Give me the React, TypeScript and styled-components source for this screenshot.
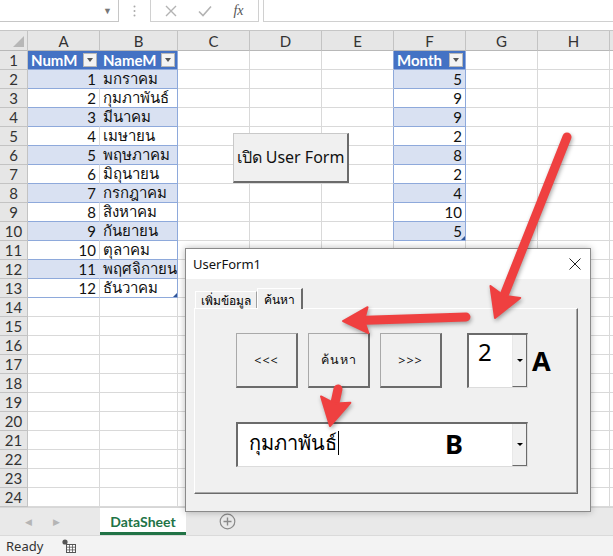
import styled, { createGlobalStyle } from 'styled-components'

const Global = createGlobalStyle`
  html, body { margin: 0; padding: 0; background: #fff; }
  body { width: 613px; height: 556px; overflow: hidden; font-family: "Lato", "Noto Sans", sans-serif; }
  * { box-sizing: border-box; }
`

const Screen = styled.div`
  position: relative;
  width: 613px;
  height: 556px;
  display: flex;
  flex-direction: column;
  overflow: hidden;
  background: #fff;
`

/* ---------- formula bar ---------- */
const FormulaBar = styled.div`
  height: 30px;
  display: flex;
  align-items: flex-start;
`
const NameBox = styled.div`
  width: 119px;
  height: 22px;
  border-right: 1px solid #c6c6c6;
  border-bottom: 1px solid #c6c6c6;
  display: flex;
  justify-content: flex-end;
  align-items: center;
  padding-right: 6px;
  color: #777;
  font-size: 9px;
`
const Grip = styled.div`
  width: 31px;
  height: 22px;
  display: flex;
  align-items: center;
  justify-content: center;
`
const FxBox = styled.div`
  width: 109px;
  height: 22px;
  border: 1px solid #d0d0d0;
  border-top: none;
  display: flex;
  align-items: center;
  justify-content: space-around;
  padding: 0 4px;
`
const FxLabel = styled.span`
  font-family: "Liberation Serif", serif;
  font-style: italic;
  font-size: 14px;
  color: #555;
`
const FormulaInput = styled.div`
  flex: 1;
  height: 22px;
  margin-left: 4px;
  border-left: 1px solid #d0d0d0;
  border-bottom: 1px solid #d0d0d0;
`

/* ---------- grid ---------- */
const Grid = styled.div`
  display: grid;
  grid-template-columns: 28px 72px 78px 72px 72px 72px 72px 72px 72px 3px;
  grid-template-rows: 20px repeat(24, 19px);
  border-top: 1px solid #c6c6c6;
`

type Kind = 'corner' | 'colhead' | 'rowhead' | 'plain' | 'thead' | 'band' | 'white'

const Cell = styled.div<{ $kind: Kind; $right?: boolean; $edge?: boolean; $blueRight?: boolean }>`
  position: relative;
  display: flex;
  align-items: center;
  justify-content: ${p => (p.$right ? 'flex-end' : p.$kind === 'colhead' || p.$kind === 'rowhead' ? 'center' : 'flex-start')};
  padding: 0 3px;
  font-size: 15px;
  white-space: nowrap;
  overflow: hidden;
  color: ${p => (p.$kind === 'thead' ? '#fff' : p.$kind === 'colhead' || p.$kind === 'rowhead' ? '#333' : '#111')};
  font-weight: ${p => (p.$kind === 'thead' ? 700 : 400)};
  background: ${p =>
    p.$kind === 'thead'
      ? '#4472c4'
      : p.$kind === 'band'
      ? '#d9e1f2'
      : p.$kind === 'colhead' || p.$kind === 'rowhead' || p.$kind === 'corner'
      ? '#e6e6e6'
      : '#fff'};
  border-right: 1px solid
    ${p =>
      p.$edge || p.$blueRight
        ? '#8ea9db'
        : p.$kind === 'thead'
        ? '#4472c4'
        : p.$kind === 'band'
        ? '#d9e1f2'
        : p.$kind === 'colhead' || p.$kind === 'rowhead' || p.$kind === 'corner'
        ? '#c3c3c3'
        : '#d9d9d9'};
  border-bottom: 1px solid
    ${p =>
      p.$kind === 'thead' || p.$kind === 'band' || p.$kind === 'white'
        ? '#8ea9db'
        : p.$kind === 'colhead' || p.$kind === 'corner'
        ? '#b8b8b8'
        : p.$kind === 'rowhead'
        ? '#c3c3c3'
        : '#d9d9d9'};
`
const CornerMark = styled.div`
  position: absolute;
  right: 3px;
  bottom: 3px;
  width: 0;
  height: 0;
  border-left: 11px solid transparent;
  border-bottom: 11px solid #b7b7b7;
`
const FilterBtn = styled.div`
  margin-left: auto;
  margin-right: -1px;
  width: 14px;
  height: 14px;
  background: #f3f3f3;
  border: 1px solid #b7b7b7;
  display: flex;
  align-items: center;
  justify-content: center;
  &::after {
    content: '';
    border-left: 3.5px solid transparent;
    border-right: 3.5px solid transparent;
    border-top: 4px solid #555;
  }
`
const TableEnd = styled.div`
  position: absolute;
  right: 0;
  bottom: 0;
  width: 0;
  height: 0;
  border-left: 4px solid transparent;
  border-bottom: 4px solid #2f5597;
`

/* ---------- sheet tabs / status ---------- */
const TabBar = styled.div`
  height: 28px;
  background: #e9e9e9;
  border-top: 1px solid #d6d6d6;
  display: flex;
  align-items: stretch;
`
const ScrollArrows = styled.div`
  width: 100px;
  display: flex;
  align-items: center;
  gap: 21px;
  padding-left: 25px;
  color: #b5b5b5;
  font-size: 9px;
`
const SheetTab = styled.div`
  width: 86px;
  background: #fff;
  display: flex;
  align-items: center;
  justify-content: center;
  font-size: 14px;
  font-weight: 700;
  color: #217346;
  border-bottom: 3px solid #217346;
  padding-top: 2px;
`
const AddSheet = styled.div`
  margin-left: 33px;
  display: flex;
  align-items: center;
`
const StatusBar = styled.div`
  flex: 1;
  background: #f3f3f3;
  border-top: 1px solid #dadada;
  display: flex;
  align-items: center;
  gap: 19px;
  padding-left: 6px;
  font-size: 13px;
  color: #333;
  font-family: "Noto Sans", sans-serif;
`

/* ---------- sheet button ---------- */
const SheetButton = styled.div`
  position: absolute;
  left: 233px;
  top: 133px;
  width: 116px;
  height: 50px;
  background: #f0f0f0;
  border-top: 1px solid #c9c9c9;
  border-left: 1px solid #c9c9c9;
  border-right: 2px solid #6b6b6b;
  border-bottom: 2px solid #6b6b6b;
  display: flex;
  align-items: center;
  justify-content: center;
  font-size: 16px;
  color: #111;
  font-family: "Noto Sans", sans-serif;
`

/* ---------- user form ---------- */
const UserForm = styled.div`
  position: absolute;
  left: 185px;
  top: 248px;
  width: 406px;
  height: 264px;
  border: 1px solid #8a8a8a;
  box-shadow: 0 0 7px rgba(0, 0, 0, 0.28);
  display: flex;
  flex-direction: column;
  font-family: "Noto Sans", sans-serif;
`
const TitleBar = styled.div`
  height: 30px;
  background: #fff;
  display: flex;
  align-items: center;
  justify-content: space-between;
  padding: 0 9px 0 7px;
  font-size: 13px;
  color: #111;
`
const FormBody = styled.div`
  flex: 1;
  background: #f0f0f0;
  padding: 9px 12px 17px 8px;
  display: flex;
  flex-direction: column;
`
const TabStrip = styled.div`
  height: 20px;
  display: flex;
  align-items: flex-end;
  padding-left: 1px;
`
const FormTab = styled.div<{ $active?: boolean }>`
  height: ${p => (p.$active ? '21px' : '17px')};
  margin-bottom: ${p => (p.$active ? '-1px' : '0')};
  background: #f0f0f0;
  border-top: 1px solid #fff;
  border-left: 1px solid #fff;
  border-right: ${p => (p.$active ? '2px solid #6b6b6b' : '1px solid #a0a0a0')};
  padding: 0 ${p => (p.$active ? '6px' : '5px')};
  font-size: 12px;
  display: flex;
  align-items: ${p => (p.$active ? 'flex-start' : 'center')};
  padding-top: ${p => (p.$active ? '1px' : '0')};
  position: relative;
  z-index: 1;
`
const TabPanel = styled.div`
  flex: 1;
  border: 1px solid;
  border-color: #fff #6b6b6b #6b6b6b #fff;
  box-shadow: inset -1px -1px 0 #a9a9a9;
  padding: 24px 0 0 41px;
  display: flex;
  flex-direction: column;
  gap: 34px;
`
const ControlRow = styled.div`
  display: flex;
  align-items: flex-start;
  gap: 10px;
`
const FormButton = styled.div`
  width: 62px;
  height: 55px;
  background: #f0f0f0;
  border-top: 1px solid #a9a9a9;
  border-left: 1px solid #a9a9a9;
  border-right: 2px solid #6b6b6b;
  border-bottom: 2px solid #6b6b6b;
  display: flex;
  align-items: center;
  justify-content: center;
  font-size: 12.5px;
  letter-spacing: 1px;
  color: #111;
`
const Combo = styled.div<{ $w: number; $h: number }>`
  position: relative;
  width: ${p => p.$w}px;
  height: ${p => p.$h}px;
  background: #fff;
  border-top: 2px solid #6b6b6b;
  border-left: 2px solid #6b6b6b;
  border-right: 1px solid #dcdcdc;
  border-bottom: 1px solid #dcdcdc;
  display: flex;
`
const ComboValue = styled.div<{ $size: number; $top?: boolean }>`
  flex: 1;
  display: flex;
  align-items: ${p => (p.$top ? 'flex-start' : 'center')};
  padding: ${p => (p.$top ? '3px 0 0 9px' : '0 0 4px 11px')};
  font-size: ${p => p.$size}px;
  color: #000;
  line-height: 1.2;
`
const Caret = styled.span`
  display: inline-block;
  width: 1px;
  height: 24px;
  background: #000;
  margin-left: 1px;
`
const DropBtn = styled.div`
  width: 15px;
  background: #f0f0f0;
  border-left: 1px solid #e8e8e8;
  border-right: 1px solid #6b6b6b;
  border-bottom: 1px solid #6b6b6b;
  display: flex;
  align-items: center;
  justify-content: center;
  &::after {
    content: '';
    border-left: 3px solid transparent;
    border-right: 3px solid transparent;
    border-top: 3px solid #000;
  }
`
const Marker = styled.span`
  font-family: "Noto Sans", sans-serif;
  font-weight: 700;
  font-size: 27px;
  color: #000;
  line-height: 1;
`
const MarkerA = styled(Marker)`
  align-self: center;
  margin-left: -6px;
`
const MarkerB = styled(Marker)`
  position: absolute;
  left: 207px;
  top: 6px;
`

const Overlay = styled.svg`
  position: absolute;
  left: 0;
  top: 0;
  pointer-events: none;
  filter: drop-shadow(1px 2px 2px rgba(0, 0, 0, 0.35));
`

const cols = ['A', 'B', 'C', 'D', 'E', 'F', 'G', 'H', '']
const months = [
  'มกราคม', 'กุมภาพันธ์', 'มีนาคม', 'เมษายน', 'พฤษภาคม', 'มิถุนายน',
  'กรกฎาคม', 'สิงหาคม', 'กันยายน', 'ตุลาคม', 'พฤศจิกายน', 'ธันวาคม',
]
const monthCol = [5, 9, 9, 2, 8, 2, 4, 10, 5]

function Arrow({ from, tip, head, half, w }: { from: [number, number]; tip: [number, number]; head: number; half: number; w: number }) {
  const dx = tip[0] - from[0]
  const dy = tip[1] - from[1]
  const len = Math.hypot(dx, dy)
  const ux = dx / len
  const uy = dy / len
  const bx = tip[0] - ux * head
  const by = tip[1] - uy * head
  const px = -uy
  const py = ux
  const pts = `${tip[0]},${tip[1]} ${bx + px * half},${by + py * half} ${bx + ux * 4},${by + uy * 4} ${bx - px * half},${by - py * half}`
  return (
    <g fill="#ef4040" stroke="#ef4040">
      <line x1={from[0]} y1={from[1]} x2={bx + ux * 2} y2={by + uy * 2} strokeWidth={w} strokeLinecap="round" />
      <polygon points={pts} strokeWidth={2} strokeLinejoin="round" />
    </g>
  )
}

function renderCell(r: number, c: number) {
  const key = `${r}-${c}`
  if (c === 8) return <Cell key={key} $kind="plain" />
  const inT1 = (c === 0 || c === 1) && r <= 13
  const inT2 = c === 5 && r <= 10
  const blueRight = c === 4 && r <= 10
  if (inT1 || inT2) {
    const kind: Kind = r === 1 ? 'thead' : r % 2 === 0 ? 'band' : 'white'
    const edge = c === 1 || c === 5
    if (r === 1) {
      const label = c === 0 ? 'NumM' : c === 1 ? 'NameM' : 'Month'
      return (
        <Cell key={key} $kind={kind} $edge={edge}>
          {label}
          <FilterBtn />
        </Cell>
      )
    }
    const idx = r - 2
    const value = c === 0 ? String(idx + 1) : c === 1 ? months[idx] : String(monthCol[idx])
    const last = (inT1 && r === 13 && c === 1) || (inT2 && r === 10)
    return (
      <Cell key={key} $kind={kind} $edge={edge} $right={c !== 1}>
        {value}
        {last && <TableEnd />}
      </Cell>
    )
  }
  return <Cell key={key} $kind="plain" $blueRight={blueRight} />
}

export default function App() {
  const rows = Array.from({ length: 24 }, (_, i) => i + 1)
  return (
    <Screen>
      <Global />
      <FormulaBar>
        <NameBox>▼</NameBox>
        <Grip>
          <svg width="3" height="12" viewBox="0 0 3 12">
            <circle cx="1.5" cy="1.5" r="1" fill="#aaa" />
            <circle cx="1.5" cy="6" r="1" fill="#aaa" />
            <circle cx="1.5" cy="10.5" r="1" fill="#aaa" />
          </svg>
        </Grip>
        <FxBox>
          <svg width="12" height="12" viewBox="0 0 12 12">
            <path d="M1 1 L11 11 M11 1 L1 11" stroke="#b3b3b3" strokeWidth="1.4" />
          </svg>
          <svg width="14" height="12" viewBox="0 0 14 12">
            <path d="M1 6.5 L5 10.5 L13 1.5" stroke="#b3b3b3" strokeWidth="1.6" fill="none" />
          </svg>
          <FxLabel>fx</FxLabel>
        </FxBox>
        <FormulaInput />
      </FormulaBar>

      <Grid>
        <Cell $kind="corner">
          <CornerMark />
        </Cell>
        {cols.map((c, i) => (
          <Cell key={`h${i}`} $kind="colhead">
            {c}
          </Cell>
        ))}
        {rows.map(r => [
          <Cell key={`r${r}`} $kind="rowhead">
            {r}
          </Cell>,
          ...cols.map((_, c) => renderCell(r, c)),
        ])}
      </Grid>

      <TabBar>
        <ScrollArrows>
          <span>◀</span>
          <span>▶</span>
        </ScrollArrows>
        <SheetTab>DataSheet</SheetTab>
        <AddSheet>
          <svg width="17" height="17" viewBox="0 0 17 17">
            <circle cx="8.5" cy="8.5" r="7.3" fill="none" stroke="#8a8a8a" strokeWidth="1.2" />
            <path d="M8.5 4.5 V12.5 M4.5 8.5 H12.5" stroke="#8a8a8a" strokeWidth="1.4" />
          </svg>
        </AddSheet>
      </TabBar>
      <StatusBar>
        <span>Ready</span>
        <svg width="14" height="14" viewBox="0 0 14 14">
          <circle cx="3" cy="3" r="2.6" fill="#555" />
          <rect x="4.5" y="5.5" width="9" height="8" fill="#fff" stroke="#555" />
          <path d="M4.5 8.2 H13.5 M4.5 10.9 H13.5 M7.5 5.5 V13.5 M10.5 5.5 V13.5" stroke="#555" strokeWidth="0.8" />
        </svg>
      </StatusBar>

      <SheetButton>เปิด User Form</SheetButton>

      <UserForm>
        <TitleBar>
          <span>UserForm1</span>
          <svg width="12" height="12" viewBox="0 0 12 12">
            <path d="M0.5 0.5 L11.5 11.5 M11.5 0.5 L0.5 11.5" stroke="#222" strokeWidth="1" />
          </svg>
        </TitleBar>
        <FormBody>
          <TabStrip>
            <FormTab>เพิ่มข้อมูล</FormTab>
            <FormTab $active>ค้นหา</FormTab>
          </TabStrip>
          <TabPanel>
            <ControlRow>
              <FormButton>&lt;&lt;&lt;</FormButton>
              <FormButton>ค้นหา</FormButton>
              <FormButton>&gt;&gt;&gt;</FormButton>
              <Combo $w={61} $h={55} style={{ marginLeft: 15 }}>
                <ComboValue $size={24} $top>
                  2
                </ComboValue>
                <DropBtn />
              </Combo>
              <MarkerA>A</MarkerA>
            </ControlRow>
            <ControlRow>
              <Combo $w={292} $h={45}>
                <ComboValue $size={20}>
                  กุมภาพันธ์
                  <Caret />
                </ComboValue>
                <MarkerB>B</MarkerB>
                <DropBtn />
              </Combo>
            </ControlRow>
          </TabPanel>
        </FormBody>
      </UserForm>

      <Overlay width="613" height="556" viewBox="0 0 613 556">
        <Arrow from={[567, 137]} tip={[495, 318]} head={28} half={16} w={9} />
        <Arrow from={[466, 317]} tip={[343, 321]} head={25} half={13} w={9} />
        <Arrow from={[338, 389]} tip={[330, 426]} head={27} half={15} w={9} />
      </Overlay>
    </Screen>
  )
}
